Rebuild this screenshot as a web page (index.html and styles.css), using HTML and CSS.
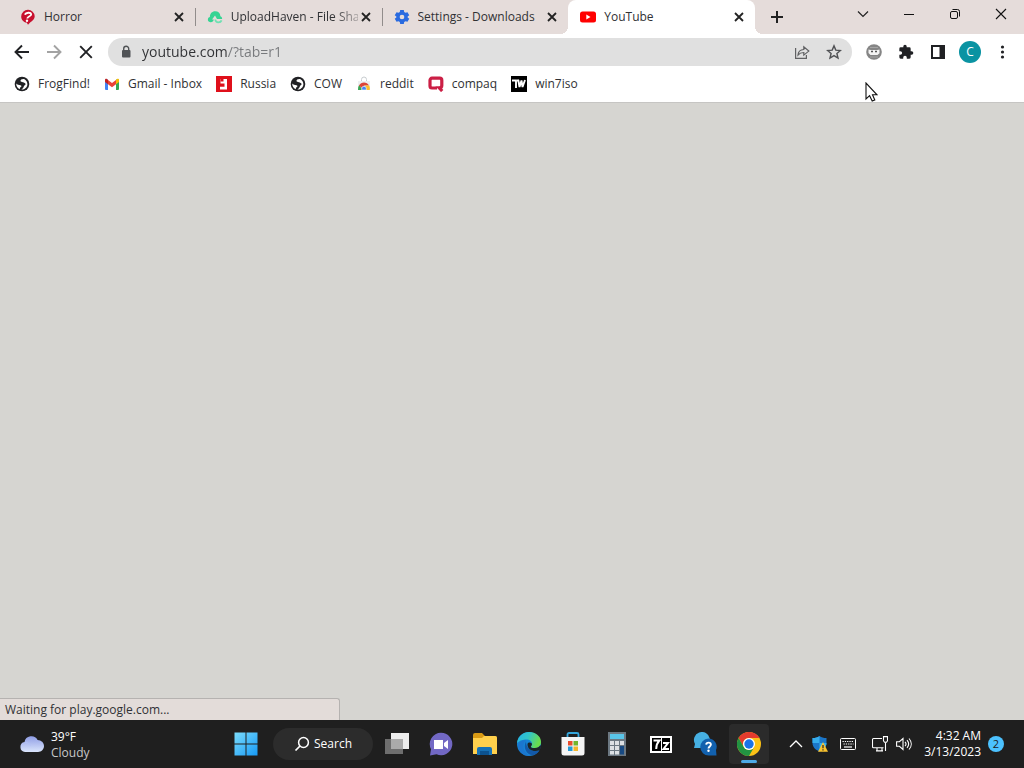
FILE: index.html
```html
<!DOCTYPE html>
<html lang="en">
<head>
<meta charset="utf-8">
<meta name="viewport" content="width=device-width, initial-scale=1">
<title>YouTube</title>
<link rel="stylesheet" href="styles.css">
</head>
<body>
<svg class="defs" aria-hidden="true">
  <symbol id="close" viewBox="0 0 16 16"><path d="M4 4l8 8M12 4l-8 8" stroke="#222" stroke-width="1.8" fill="none"/></symbol>
  <symbol id="globe" viewBox="0 0 16 16"><circle cx="8" cy="8" r="7.3" fill="#202124"/><path d="M10.500 3.200c-2.500-.4-4.200.6-4 1.900.2 1.500 4.700 1 5 3 .2 1.200-1.300 1.200-1.600 2.200-.3 1.200-1.200 2.700-2.700 3.200 2.800.5 6-1.800 6.200-5 .1-2.300-1-4.300-2.900-5.300zM2.200 7.500c1 1.300 2.600 1.500 4.300 1.800 1.600.3 1 1.600 0 2-.8.400-.5 1.300-.8 2C3.500 12.300 2.200 10.300 2.200 7.500z" fill="#fff"/></symbol>
</svg>

<header class="browser">
  <div class="tabstrip">
    <div class="tabs">
      <div class="tab">
        <svg class="icon" viewBox="0 0 16 16"><path d="M8 .8a6.600 6.600 0 0 1 6.700 6.400c0 3.200-2.700 4.700-4.800 6.500L8 15.800l-1.300-2.200C3.300 13 1.200 10.500 1.200 7.400A6.700 6.700 0 0 1 8 .8z" fill="#c8102e"/><path d="M4.800 5.600C6 3.500 10.700 3 11.200 5.200c.4 2-3.700 2-3.900 4.300" stroke="#fff" stroke-width="1.900" fill="none"/><circle cx="7" cy="11.800" r="1.200" fill="#fff"/></svg>
        <span class="tab-title">Horror</span>
        <button class="tab-close" aria-label="Close Horror"><svg class="icon"><use href="#close"/></svg></button>
      </div>
      <div class="tab divided">
        <svg class="icon" viewBox="0 0 16 16"><path d="M3.500 13.300C1.200 13 .5 11.500 1 9.800c.3-1 1-1.500 1.900-1.700C2.800 4.500 5 2.300 8.200 2.300c3 0 5 1.900 5.200 4.900 1.200.5 1.900 1.500 1.700 2.900H10L8 6.500l-3 4h1.700c-.2 1.700-1.400 2.900-3.200 2.800z" fill="#35d493"/><path d="M8.300 10.500c.2 1.700 1.200 2.900 3 2.900 1.600 0 2.800-.7 3.300-2" stroke="#6fe0b2" stroke-width="1.800" fill="none"/></svg>
        <span class="tab-title faded">UploadHaven - File Sha</span>
        <button class="tab-close" aria-label="Close UploadHaven"><svg class="icon"><use href="#close"/></svg></button>
      </div>
      <div class="tab divided">
        <svg class="icon" viewBox="0 0 24 24"><path fill="#2a6be0" fill-rule="evenodd" d="M9.300 1.500h5.400l.6 3.100 1.900 1.100 3-1 2.700 4.600-2.400 2.100v1.200l2.400 2.100-2.700 4.600-3-1-1.900 1.100-.6 3.100H9.300l-.6-3.100-1.900-1.100-3 1-2.700-4.600 2.400-2.100v-1.200L1.100 9.300l2.700-4.600 3 1 1.900-1.100zM12 8.500a3.500 3.500 0 1 0 0 7 3.500 3.500 0 0 0 0-7z"/></svg>
        <span class="tab-title">Settings - Downloads</span>
        <button class="tab-close" aria-label="Close Settings"><svg class="icon"><use href="#close"/></svg></button>
      </div>
      <div class="tab active">
        <svg class="icon" viewBox="0 0 16 16"><rect y="2.500" width="16" height="11" rx="2.500" fill="#f00"/><path d="M6.300 5.600v4.800L10.500 8z" fill="#fff"/></svg>
        <span class="tab-title">YouTube</span>
        <button class="tab-close" aria-label="Close YouTube"><svg class="icon"><use href="#close"/></svg></button>
      </div>
    </div>
    <button class="new-tab" aria-label="New tab"><svg class="icon" viewBox="0 0 16 16"><path d="M8 2v12M2 8h12" stroke="#222" stroke-width="2"/></svg></button>
    <div class="window-controls">
      <button aria-label="Search tabs"><svg class="icon" viewBox="0 0 16 16"><path d="M3 5.500l5 5 5-5" stroke="#222" stroke-width="1.200" fill="none"/></svg></button>
      <button aria-label="Minimize"><svg class="icon" viewBox="0 0 16 16"><path d="M3 8.500h10" stroke="#111"/></svg></button>
      <button aria-label="Restore"><svg class="icon" viewBox="0 0 16 16"><rect x="3.500" y="5.500" width="7" height="7" rx="1.500" fill="none" stroke="#111"/><path d="M5.500 3.500h5a2 2 0 0 1 2 2v5" fill="none" stroke="#111"/></svg></button>
      <button aria-label="Close window"><svg class="icon" viewBox="0 0 16 16"><path d="M3 3l10 10M13 3L3 13" stroke="#111" stroke-width="1.100"/></svg></button>
    </div>
  </div>

  <div class="toolbar">
    <button class="tool" aria-label="Back"><svg class="icon" viewBox="0 0 16 16"><path d="M15 8H2M8 1.500L1.500 8 8 14.500" stroke="#202124" stroke-width="1.900" fill="none"/></svg></button>
    <button class="tool" aria-label="Forward"><svg class="icon" viewBox="0 0 16 16"><path d="M1 8h13M8 1.500L14.500 8 8 14.500" stroke="#a3a3a3" stroke-width="1.900" fill="none"/></svg></button>
    <button class="tool" aria-label="Stop"><svg class="icon" viewBox="0 0 16 16"><path d="M2.200 2.200l11.600 11.600M13.800 2.200L2.200 13.800" stroke="#202124" stroke-width="1.900"/></svg></button>
    <div class="omnibox">
      <svg class="icon" viewBox="0 0 16 16"><rect x="4" y="6" width="8.500" height="7.500" rx="1" fill="#505356"/><path d="M5.700 7V4.800a2.500 2.500 0 0 1 5 0V7" stroke="#505356" stroke-width="1.400" fill="none"/></svg>
      <input class="address" type="text" aria-label="Address" value="youtube.com/?tab=r1" spellcheck="false">
      <button class="tool" aria-label="Share"><svg class="icon" viewBox="0 0 16 16"><path d="M1.600 4v10.400h10.800V11M4 11c.2-3.400 2-5.300 5.800-5.500V2.800l5 4.300-5 4V8.500C7 8.500 5.400 9.300 4 11z" stroke="#606163" stroke-width="1.200" fill="none"/></svg></button>
      <button class="tool" aria-label="Bookmark this tab"><svg class="icon" viewBox="0 0 16 16"><path d="M8 1.900l1.800 4.200 4.600.4-3.500 3 1.100 4.500-4-2.400L4 14l1.100-4.500-3.500-3 4.600-.4z" stroke="#505154" stroke-width="1.400" fill="none"/></svg></button>
    </div>
    <button class="tool" aria-label="Extension"><svg class="icon" viewBox="0 0 16 16"><circle cx="8" cy="8" r="7.800" fill="#858585"/><path d="M2.500 5.500c2 .8 9 .8 11 0v3.700L11.500 11h-7L2.500 9z" fill="#f4f4f4"/><path d="M5 7.500h2M9 7.500h2" stroke="#555" stroke-width="1.400"/><path d="M4 13h8M4 3.500h8" stroke="#a5a5a5"/></svg></button>
    <button class="tool" aria-label="Extensions"><svg class="icon" viewBox="0 0 24 24"><path fill="#202124" d="M20.500 11H19V7a2 2 0 0 0-2-2h-4V3.500a2.500 2.500 0 0 0-5 0V5H4a2 2 0 0 0-2 2v3.800h1.500a2.700 2.700 0 0 1 0 5.400H2V20a2 2 0 0 0 2 2h3.800v-1.500a2.700 2.700 0 0 1 5.400 0V22H17a2 2 0 0 0 2-2v-4h1.500a2.500 2.500 0 0 0 0-5z"/></svg></button>
    <button class="tool" aria-label="Side panel"><svg class="icon" viewBox="0 0 16 16"><path d="M1 1h14v14H1zM3 3v10h6.500V3z" fill="#202124" fill-rule="evenodd"/></svg></button>
    <button class="tool" aria-label="Profile"><span class="avatar">C</span></button>
    <button class="tool" aria-label="Menu"><svg class="icon" viewBox="0 0 16 16"><g fill="#202124"><circle cx="8.500" cy="3" r="1.600"/><circle cx="8.500" cy="8" r="1.600"/><circle cx="8.500" cy="13" r="1.600"/></g></svg></button>
  </div>

  <nav class="bookmarks" aria-label="Bookmarks">
    <a href="#"><svg class="icon"><use href="#globe"/></svg>FrogFind!</a>
    <a href="#"><svg class="icon" viewBox="0 0 16 16"><path d="M1 3.500h3V14H2a1 1 0 0 1-1-1z" fill="#4285f4"/><path d="M12 3.500h3V13a1 1 0 0 1-1 1h-2z" fill="#34a853"/><path d="M12 4l1-.9c.9-.7 2-.1 2 1V6l-3 2.300z" fill="#fbbc04"/><path d="M4 4l-1-.9c-.9-.7-2-.1-2 1V6l3 2.300z" fill="#c5221f"/><path d="M4 4l4 3 4-3v4.300l-4 3-4-3z" fill="#ea4335"/></svg>Gmail - Inbox</a>
    <a href="#"><svg class="icon" viewBox="0 0 16 16"><path d="M0 0h16v16H0z" fill="#df101b"/><path d="M4.500 3H11v10.500H4V10.800h4.500V7.500H4.500z" fill="#fff"/><path d="M4.500 3h3v2.500h-3z" fill="#df101b"/></svg>Russia</a>
    <a href="#"><svg class="icon"><use href="#globe"/></svg>COW</a>
    <a href="#"><svg class="icon" viewBox="0 0 16 16"><path d="M2 5h12v9H2z" fill="#eceff1"/><path d="M5.500 5V3.500a2.500 2.500 0 0 1 5 0V5" fill="none" stroke="#c8cdd0"/><path d="M2 14a6 6 0 0 1 1.300-5L6 13v1z" fill="#39a852"/><path d="M3 9.500c2-4 8-4 10 0H8.500L6 12z" fill="#dc4437"/><path d="M9 9.500h4.200c.7 1.500.7 3 .5 4.500H9z" fill="#fbc02d"/><path d="M5.700 14v-1.500a2.300 2.300 0 0 1 4.600 0V14z" fill="#4285f4" stroke="#fff" stroke-width=".6"/></svg>reddit</a>
    <a href="#"><svg class="icon" viewBox="0 0 16 16"><path d="M9 12H4a2 2 0 0 1-2-2V4.200a2 2 0 0 1 2-2h7.800a2 2 0 0 1 2 2V9.500c0 2-1 2.300-2.600 2.300l3 3.200" fill="none" stroke="#cb1f45" stroke-width="3.200"/></svg>compaq</a>
    <a href="#"><svg class="icon" viewBox="0 0 16 16"><path d="M0 0h16v16H0z"/><path d="M1 4.500h4V12M6 4.500h2M7.300 4l1.200 7 2-6.500 1 6.500 2.500-7" fill="none" stroke="#fff" stroke-width="1.900"/></svg>win7iso</a>
  </nav>
</header>

<main class="page">
  <div class="status" role="status">Waiting for play.google.com...</div>
  <svg class="cursor" viewBox="0 0 13 20" aria-hidden="true"><path d="M1 1v16l3.600-3.300L7.200 19l2.600-1.100-2.300-5.100H12z" fill="#fff" stroke="#111" stroke-width="1.100"/></svg>
</main>

<footer class="taskbar">
  <button class="weather">
    <svg class="weather-icon" viewBox="0 0 26 18"><defs><linearGradient id="cloud" x2="0" y2="1"><stop stop-color="#8f9de5"/><stop offset="1" stop-color="#dae5fc"/></linearGradient></defs><path d="M6 17a5 5 0 0 1-.5-9.900A7 7 0 0 1 18.600 5c3.800.2 6.400 2.800 6.400 6s-2.600 6-6 6z" fill="url(#cloud)"/><path d="M6 7.500c3 0 5 1.500 5.500 3" stroke="#b3c2f7" fill="none"/></svg>
    <span class="weather-text"><strong>39°F</strong><span>Cloudy</span></span>
  </button>
  <nav class="apps" aria-label="Taskbar">
    <button class="app" aria-label="Start"><svg viewBox="0 0 24 24"><defs><linearGradient id="win" x2="1" y2="1"><stop stop-color="#7bdcfc"/><stop offset="1" stop-color="#1699f5"/></linearGradient></defs><path d="M.5.500h11v11H.5zM12.500.500h11v11h-11zM.5 12.500h11v11H.5zM12.500 12.500h11v11h-11z" fill="url(#win)"/></svg></button>
    <button class="search"><svg class="icon" viewBox="0 0 16 16"><circle cx="9.500" cy="6.500" r="4.900" fill="none" stroke="#fff" stroke-width="1.500"/><path d="M6 10l-4.500 4.500" stroke="#fff" stroke-width="1.700"/></svg>Search</button>
    <button class="app" aria-label="Task view"><svg viewBox="0 0 24 24"><path d="M6 1h18v16H6z" fill="#ececec"/><path d="M0 7h18v15H0z" fill="#777" opacity=".9"/><path d="M6 7h12v10H6z" fill="#aaa"/></svg></button>
    <button class="app" aria-label="Chat"><svg viewBox="0 0 24 24"><path d="M12 .8a11.200 11.200 0 1 1-4.500 21.400L1 23.500l1-6.300A11.200 11.200 0 0 1 12 .8z" fill="#7268c4"/><path d="M5 8h9v9H5zM15 11l4-3v9l-4-3z" fill="#fff"/></svg></button>
    <button class="app" aria-label="File Explorer"><svg viewBox="0 0 24 24"><path d="M0 3a2 2 0 0 1 2-2h7l3 3h10a2 2 0 0 1 2 2v16H0z" fill="#d99a14"/><path d="M0 6h9l2-2h11a2 2 0 0 1 2 2v16H0z" fill="#ffd04c"/><path d="M4 23v-6a2 2 0 0 1 2-2h11a2 2 0 0 1 2 2v6z" fill="#1671b5"/><path d="M7 19h9v4H7z" fill="#0c528f"/></svg></button>
    <button class="app" aria-label="Microsoft Edge"><svg viewBox="0 0 24 24"><defs><linearGradient id="edge" x2="1" y2=".3"><stop stop-color="#25b5e6"/><stop offset=".5" stop-color="#31c5c9"/><stop offset="1" stop-color="#69dc4c"/></linearGradient></defs><circle cx="12" cy="12" r="12" fill="#1683d5"/><path d="M0 11C1 4 6 0 12 0c7 0 12 4.500 12 10 0 4-3 6-6 6-4 0-5-1-3-3 1-4-3-6-7-5.500C5 7.800 2 9 0 11z" fill="url(#edge)"/><path d="M9 8.300C5 11 5 20 13 23.900 6 24 2 20 1 14c0-4 4-6.500 8-5.700z" fill="#1b76cf"/><path d="M9 9.500c-3 6 0 13 7 13.800 3-.8 5-2.500 6.500-5C17 20.500 9 18 9 9.500z" fill="#1359a8"/><path d="M14.900 12.900c-2 2-1 3.200 3 3.200 2.500 0 4.500-1 5.500-3l.6 1.500c-.3 1.700-.8 2.600-1.500 3.700C17 20.500 10 18 10.500 12c.5-2 4.900-2 4.400.9z" fill="#1c2528"/></svg></button>
    <button class="app" aria-label="Microsoft Store"><svg viewBox="0 0 24 24"><path d="M6.500 6V2.500A1.500 1.500 0 0 1 8 1h8a1.500 1.500 0 0 1 1.500 1.500V6" fill="none" stroke="#35a6dc" stroke-width="1.800"/><path d="M.5 5h23v16a2.500 2.500 0 0 1-2.500 2.500H3A2.500 2.500 0 0 1 .5 21z" fill="#f5f5f5"/><path d="M7 9h4.500v4.500H7z" fill="#e94d2e"/><path d="M12.500 9H17v4.500h-4.500z" fill="#72b52d"/><path d="M7 14.500h4.500V19H7z" fill="#249ad6"/><path d="M12.500 14.500H17V19h-4.500z" fill="#f4b62c"/></svg></button>
    <button class="app" aria-label="Calculator"><svg viewBox="0 0 24 24"><path d="M3 0h18v24H3z" fill="#6c7882"/><path d="M5 2h14v5H5z" fill="#59c5e9"/><g fill="#dce0e4"><path d="M5 9h4v4H5zM10 9h4v4h-4zM15 9h4v4h-4zM5 14h4v4H5zM10 14h4v4h-4zM5 19h4v3.500H5zM10 19h4v3.500h-4z"/></g><path d="M15 14h4v8.500h-4z" fill="#184a83"/></svg></button>
    <button class="app" aria-label="7-Zip"><svg viewBox="0 0 24 24"><path d="M1 4h22v17H1z" fill="#fff"/><path d="M3 6h9v13H3zM13 6h8v13h-8z" fill="#000"/><path d="M4.500 8.500h5.800C8 11 7.300 13.500 7.200 17M14 11h5l-4.500 6H20" fill="none" stroke="#fff" stroke-width="2"/></svg></button>
    <button class="app" aria-label="Get Help"><svg viewBox="0 0 24 24"><path d="M1 16l1-4A8 8 0 1 1 9 16z" fill="#46b0e2"/><path d="M15.500 6.500A8.200 8.200 0 0 1 23 18l.5 5.500H16a8.500 8.500 0 1 1-.5-17z" fill="#1261ae"/><path d="M13.200 12.600c.2-2.700 4.700-2.600 4.700 0 0 2-2.400 1.700-2.400 4" fill="none" stroke="#fff" stroke-width="1.900"/><circle cx="15.500" cy="18.800" r="1.200" fill="#fff"/></svg></button>
    <button class="app running" aria-label="Google Chrome"><svg viewBox="0 0 24 24"><circle cx="12" cy="12" r="12" fill="#fbc116"/><path d="M1.600 6A12 12 0 0 1 22.400 6H12a6 6 0 0 0-5.200 9z" fill="#e33b2e"/><path d="M1.600 6A12 12 0 0 0 12 24l5.200-9A6 6 0 0 1 6.800 15z" fill="#229342"/><circle cx="12" cy="12" r="6" fill="#fff"/><circle cx="12" cy="12" r="4.700" fill="#1a73e8"/></svg></button>
  </nav>
  <div class="tray">
    <button aria-label="Show hidden icons"><svg class="icon" viewBox="0 0 16 16"><path d="M2 11l6-6 6 6" fill="none" stroke="#fff" stroke-width="1.300"/></svg></button>
    <button aria-label="Windows Security"><svg class="icon" viewBox="0 0 16 16"><path d="M7.500 0C5.500 1.500 3.500 2 .5 2v5c0 4 3 7 7 8.500 4-1.500 7-4.500 7-8.500V2c-3 0-5-.5-7-2z" fill="#1b76c8"/><path d="M7.500 0c-2 1.500-4 2-7 2v5h7zM7.500 7h7c0 4-3 7-7 8.500z" fill="#35acec"/><path d="M11 6l5 9.700H6z" fill="#fac32f"/><path d="M11 9v3.200M11 13.200v1.300" stroke="#222" stroke-width="1.200"/></svg></button>
    <button class="keyboard" aria-label="Touch keyboard"><svg class="icon" viewBox="0 0 16 16"><rect x=".5" y="2.500" width="15" height="11" rx="1" fill="none" stroke="#fff"/><path d="M2.500 5.500h11M3.500 8h10" stroke="#fff" stroke-width="1.200" stroke-dasharray="1.300 1"/><path d="M4 11h8" stroke="#fff" stroke-width="1.200"/></svg></button>
    <button class="system" aria-label="Network and volume">
      <svg class="icon" viewBox="0 0 16 16"><path d="M10 2.500H1.500a1 1 0 0 0-1 1v7.200a1 1 0 0 0 1 1h10M4 14.900h7M5 12v3M10 12v3M13.500 6.500V15" fill="none" stroke="#fff" stroke-width="1.100"/><path d="M11.500.600h4v4.200l-1 1.500h-2l-1-1.500z" fill="none" stroke="#fff" stroke-width="1.100"/></svg>
      <svg class="icon" viewBox="0 0 16 16"><path d="M.6 5.700h2.800L7 2.500v11l-3.600-3.200H.6z" fill="none" stroke="#fff" stroke-width="1.100"/><path d="M9 5.800c1.200 1.300 1.200 3.100 0 4.400M11 4.200c2 2.300 2 5.300 0 7.600M13 2.500c3 3.300 3 7.700 0 11" fill="none" stroke="#fff" stroke-width="1.100"/></svg>
    </button>
    <button class="clock"><span class="clock-text"><span>4:32 AM</span><span>3/13/2023</span></span><span class="count">2</span></button>
  </div>
</footer>
</body>
</html>
```
FILE: styles.css
```css
* { box-sizing: border-box; }

body {
  margin: 0;
  min-height: 100vh;
  display: flex;
  flex-direction: column;
  background: #d6d5d1;
  color: #303134;
  font: 12px/16px "Open Sans", "Noto Sans", sans-serif;
}

button {
  padding: 0;
  border: 0;
  background: none;
  color: inherit;
  font: inherit;
  display: flex;
  align-items: center;
  justify-content: center;
}

.defs { position: absolute; width: 0; height: 0; }
.icon { width: 16px; height: 16px; flex: none; display: block; }

/* Tab strip */
.browser { background: #fff; border-bottom: 1px solid #c6c5c3; }
.tabstrip { display: flex; height: 34px; padding-left: 8px; background: #e5dcda; }
.tabs { display: flex; flex: 0 1 747px; min-width: 0; }
.tab {
  position: relative;
  display: flex;
  align-items: center;
  flex: 1 1 0;
  min-width: 0;
  gap: 8px;
  padding: 0 8px 0 12px;
}
.tab.divided::before {
  content: "";
  position: absolute;
  left: 0;
  top: 8px;
  width: 1px;
  height: 18px;
  background: #918c8b;
}
.tab.active { background: #fff; border-radius: 8px 8px 0 0; }
.tab.active::before,
.tab.active::after {
  content: "";
  position: absolute;
  bottom: 0;
  width: 8px;
  height: 8px;
}
.tab.active::before { right: 100%; background: radial-gradient(circle at 0 0, #e5dcda 8px, #fff 8px); }
.tab.active::after { left: 100%; background: radial-gradient(circle at 100% 0, #e5dcda 8px, #fff 8px); }
.tab-title { flex: 1; min-width: 0; margin-right: -8px; overflow: hidden; white-space: nowrap; }
.tab-title.faded { mask-image: linear-gradient(to right, #000 80%, rgb(0 0 0 / 30%)); }
.new-tab { width: 28px; margin-left: 8px; }
.window-controls { display: flex; height: 28px; margin-left: auto; }
.window-controls button { width: 46px; }

/* Toolbar */
.toolbar { display: flex; align-items: center; height: 36px; padding: 0 6px; }
.tool { width: 32px; height: 28px; flex: none; }
.omnibox {
  display: flex;
  align-items: center;
  flex: 1;
  min-width: 0;
  height: 28px;
  margin: 0 6px;
  padding: 0 2px 0 10px;
  border-radius: 14px;
  background: #e0e0e0;
}
.address {
  flex: 1;
  min-width: 0;
  margin-left: 8px;
  padding: 0;
  border: 0;
  outline: 0;
  color: #303134;
  font: 14px/20px "Open Sans", "Noto Sans", sans-serif;
  background: linear-gradient(to right, #303134 85px, #77797c 85px);
  background-clip: text;
  -webkit-background-clip: text;
  -webkit-text-fill-color: transparent;
}
.avatar {
  width: 22px;
  height: 22px;
  border-radius: 50%;
  background: #0a93a2;
  color: #fff;
  line-height: 22px;
}

/* Bookmarks */
.bookmarks { display: flex; align-items: center; gap: 14px; height: 32px; padding: 0 14px 4px; }
.bookmarks a { display: flex; align-items: center; gap: 8px; color: inherit; text-decoration: none; white-space: nowrap; }

/* Page */
.page { position: relative; flex: 1; }
.status {
  position: absolute;
  left: 0;
  bottom: 0;
  width: 340px;
  height: 22px;
  padding: 3px 5px;
  border: solid #b5b2b0;
  border-width: 1px 1px 0 0;
  border-radius: 0 3px 0 0;
  background: #e3dcd9;
}
.cursor { position: absolute; left: 865px; top: -21px; width: 13px; height: 20px; }

/* Taskbar */
.taskbar { display: flex; align-items: center; height: 48px; background: #1f1f1f; color: #fff; }
.weather { flex: 0 0 224px; justify-content: flex-start; gap: 6px; padding-left: 19px; text-align: left; }
.weather-icon { width: 26px; height: 18px; }
.weather-text { display: flex; flex-direction: column; padding-top: 2px; color: #c8c8c8; }
.weather-text strong { font-weight: 500; color: #fff; }
.apps { display: flex; align-items: center; gap: 4px; padding-left: 2px; }
.app { position: relative; width: 40px; height: 40px; border-radius: 4px; }
.app svg { width: 24px; height: 24px; }
.app.running { background: #2b2b2b; }
.app.running::after {
  content: "";
  position: absolute;
  left: 12px;
  bottom: 1px;
  width: 16px;
  height: 3px;
  border-radius: 2px;
  background: #4ea9e6;
}
.search { width: 100px; height: 32px; margin-left: 3px; gap: 4px; border-radius: 16px; background: #2c2c2c; }
.tray { display: flex; align-items: center; margin-left: auto; padding-right: 20px; }
.tray button { width: 24px; height: 40px; }
.tray .keyboard { width: 32px; }
.tray .system { width: 48px; gap: 8px; margin-left: 4px; }
.tray .clock { width: auto; gap: 7px; margin-left: 8px; }
.clock-text { display: flex; flex-direction: column; text-align: right; }
.count { width: 16px; height: 16px; border-radius: 50%; background: #4cc2ff; color: #1c1c1c; font-size: 11px; text-align: center; }
```
